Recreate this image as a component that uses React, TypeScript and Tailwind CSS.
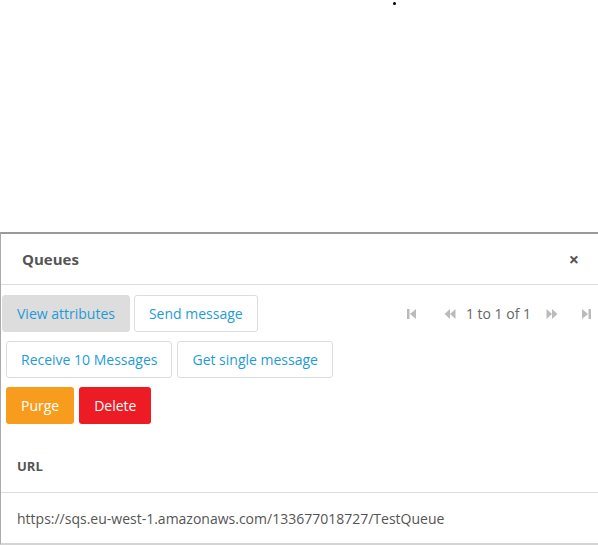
function PagerIcon({ kind }: { kind: "first" | "prev" | "next" | "last" }) {
    // small filled glyphs like the grid pager
    const flip = kind === "next" || kind === "last";
    return (
        <svg
            width="12"
            height="12"
            viewBox="0 0 12 12"
            className={flip ? "scale-x-[-1]" : ""}
            fill="#bbbbbb"
        >
            {kind === "first" || kind === "last" ? (
                <>
                    <rect x="1" y="1" width="2.5" height="10" />
                    <polygon points="10,1 10,11 4,6" />
                </>
            ) : (
                <>
                    <polygon points="6,1 6,11 0.5,6" />
                    <polygon points="11.5,1 11.5,11 6,6" />
                </>
            )}
        </svg>
    );
}

function OutlineButton({ label, active }: { label: string; active?: boolean }) {
    return (
        <button
            className={
                "h-[37px] rounded-[3px] border px-[14px] text-[14px] text-[#1e9bd7] " +
                (active
                    ? "border-[#dddddd] bg-[#dddddd]"
                    : "border-[#dddddd] bg-white")
            }
        >
            {label}
        </button>
    );
}

export default function App() {
    return (
        <div
            className="min-h-[545px] w-[598px] overflow-hidden bg-white"
            style={{ fontFamily: '"Open Sans", "Liberation Sans", sans-serif' }}
        >
            {/* stray dot above the panel */}
            <div className="h-[232px] pt-[2px]">
                <div className="ml-[393px] h-[3px] w-[3px] rounded-full bg-black" />
            </div>

            {/* Queues panel */}
            <div className="w-[620px] border-t-2 border-b-2 border-l border-t-[#9a9a9a] border-b-[#d4d4d4] border-l-[#aaaaaa]">
                {/* Header */}
                <div className="flex h-[51px] items-center justify-between border-b border-[#dddddd] pl-[21px] pr-[41px]">
                    <h2 className="text-[15px] font-bold text-[#555555]">Queues</h2>
                    <span className="text-[18px] font-bold leading-none text-[#555555]">×</span>
                </div>

                {/* Actions */}
                <div className="flex flex-col gap-[9px] pt-[10px]">
                    <div className="flex items-center justify-between pl-[1px] pr-[28px]">
                        <div className="flex gap-[4px]">
                            <OutlineButton label="View attributes" active />
                            <OutlineButton label="Send message" />
                        </div>
                        <div className="flex items-center text-[14px] text-[#666666]">
                            <span className="mr-[26px]"><PagerIcon kind="first" /></span>
                            <span className="mr-[10px]"><PagerIcon kind="prev" /></span>
                            <span className="mr-[15px]">1 to 1 of 1</span>
                            <span className="mr-[22px]"><PagerIcon kind="next" /></span>
                            <span><PagerIcon kind="last" /></span>
                        </div>
                    </div>

                    <div className="flex gap-[5px] pl-[5px]">
                        <OutlineButton label="Receive 10 Messages" />
                        <OutlineButton label="Get single message" />
                    </div>

                    <div className="flex gap-[5px] pl-[5px]">
                        <button className="h-[37px] rounded-[3px] bg-[#f89c1e] px-[15px] text-[14px] text-white">
                            Purge
                        </button>
                        <button className="h-[37px] rounded-[3px] bg-[#ed1c24] px-[15px] text-[14px] text-white">
                            Delete
                        </button>
                    </div>
                </div>

                {/* Table */}
                <div className="mt-[18px]">
                    <div className="flex h-[51px] items-center border-b border-[#dddddd] px-[16px] text-[13px] font-bold text-[#555555]">
                        URL
                    </div>
                    <div className="flex h-[50px] items-center px-[16px] text-[14px] text-[#555555]">
                        https://sqs.eu-west-1.amazonaws.com/133677018727/TestQueue
                    </div>
                </div>
            </div>
        </div>
    );
}
